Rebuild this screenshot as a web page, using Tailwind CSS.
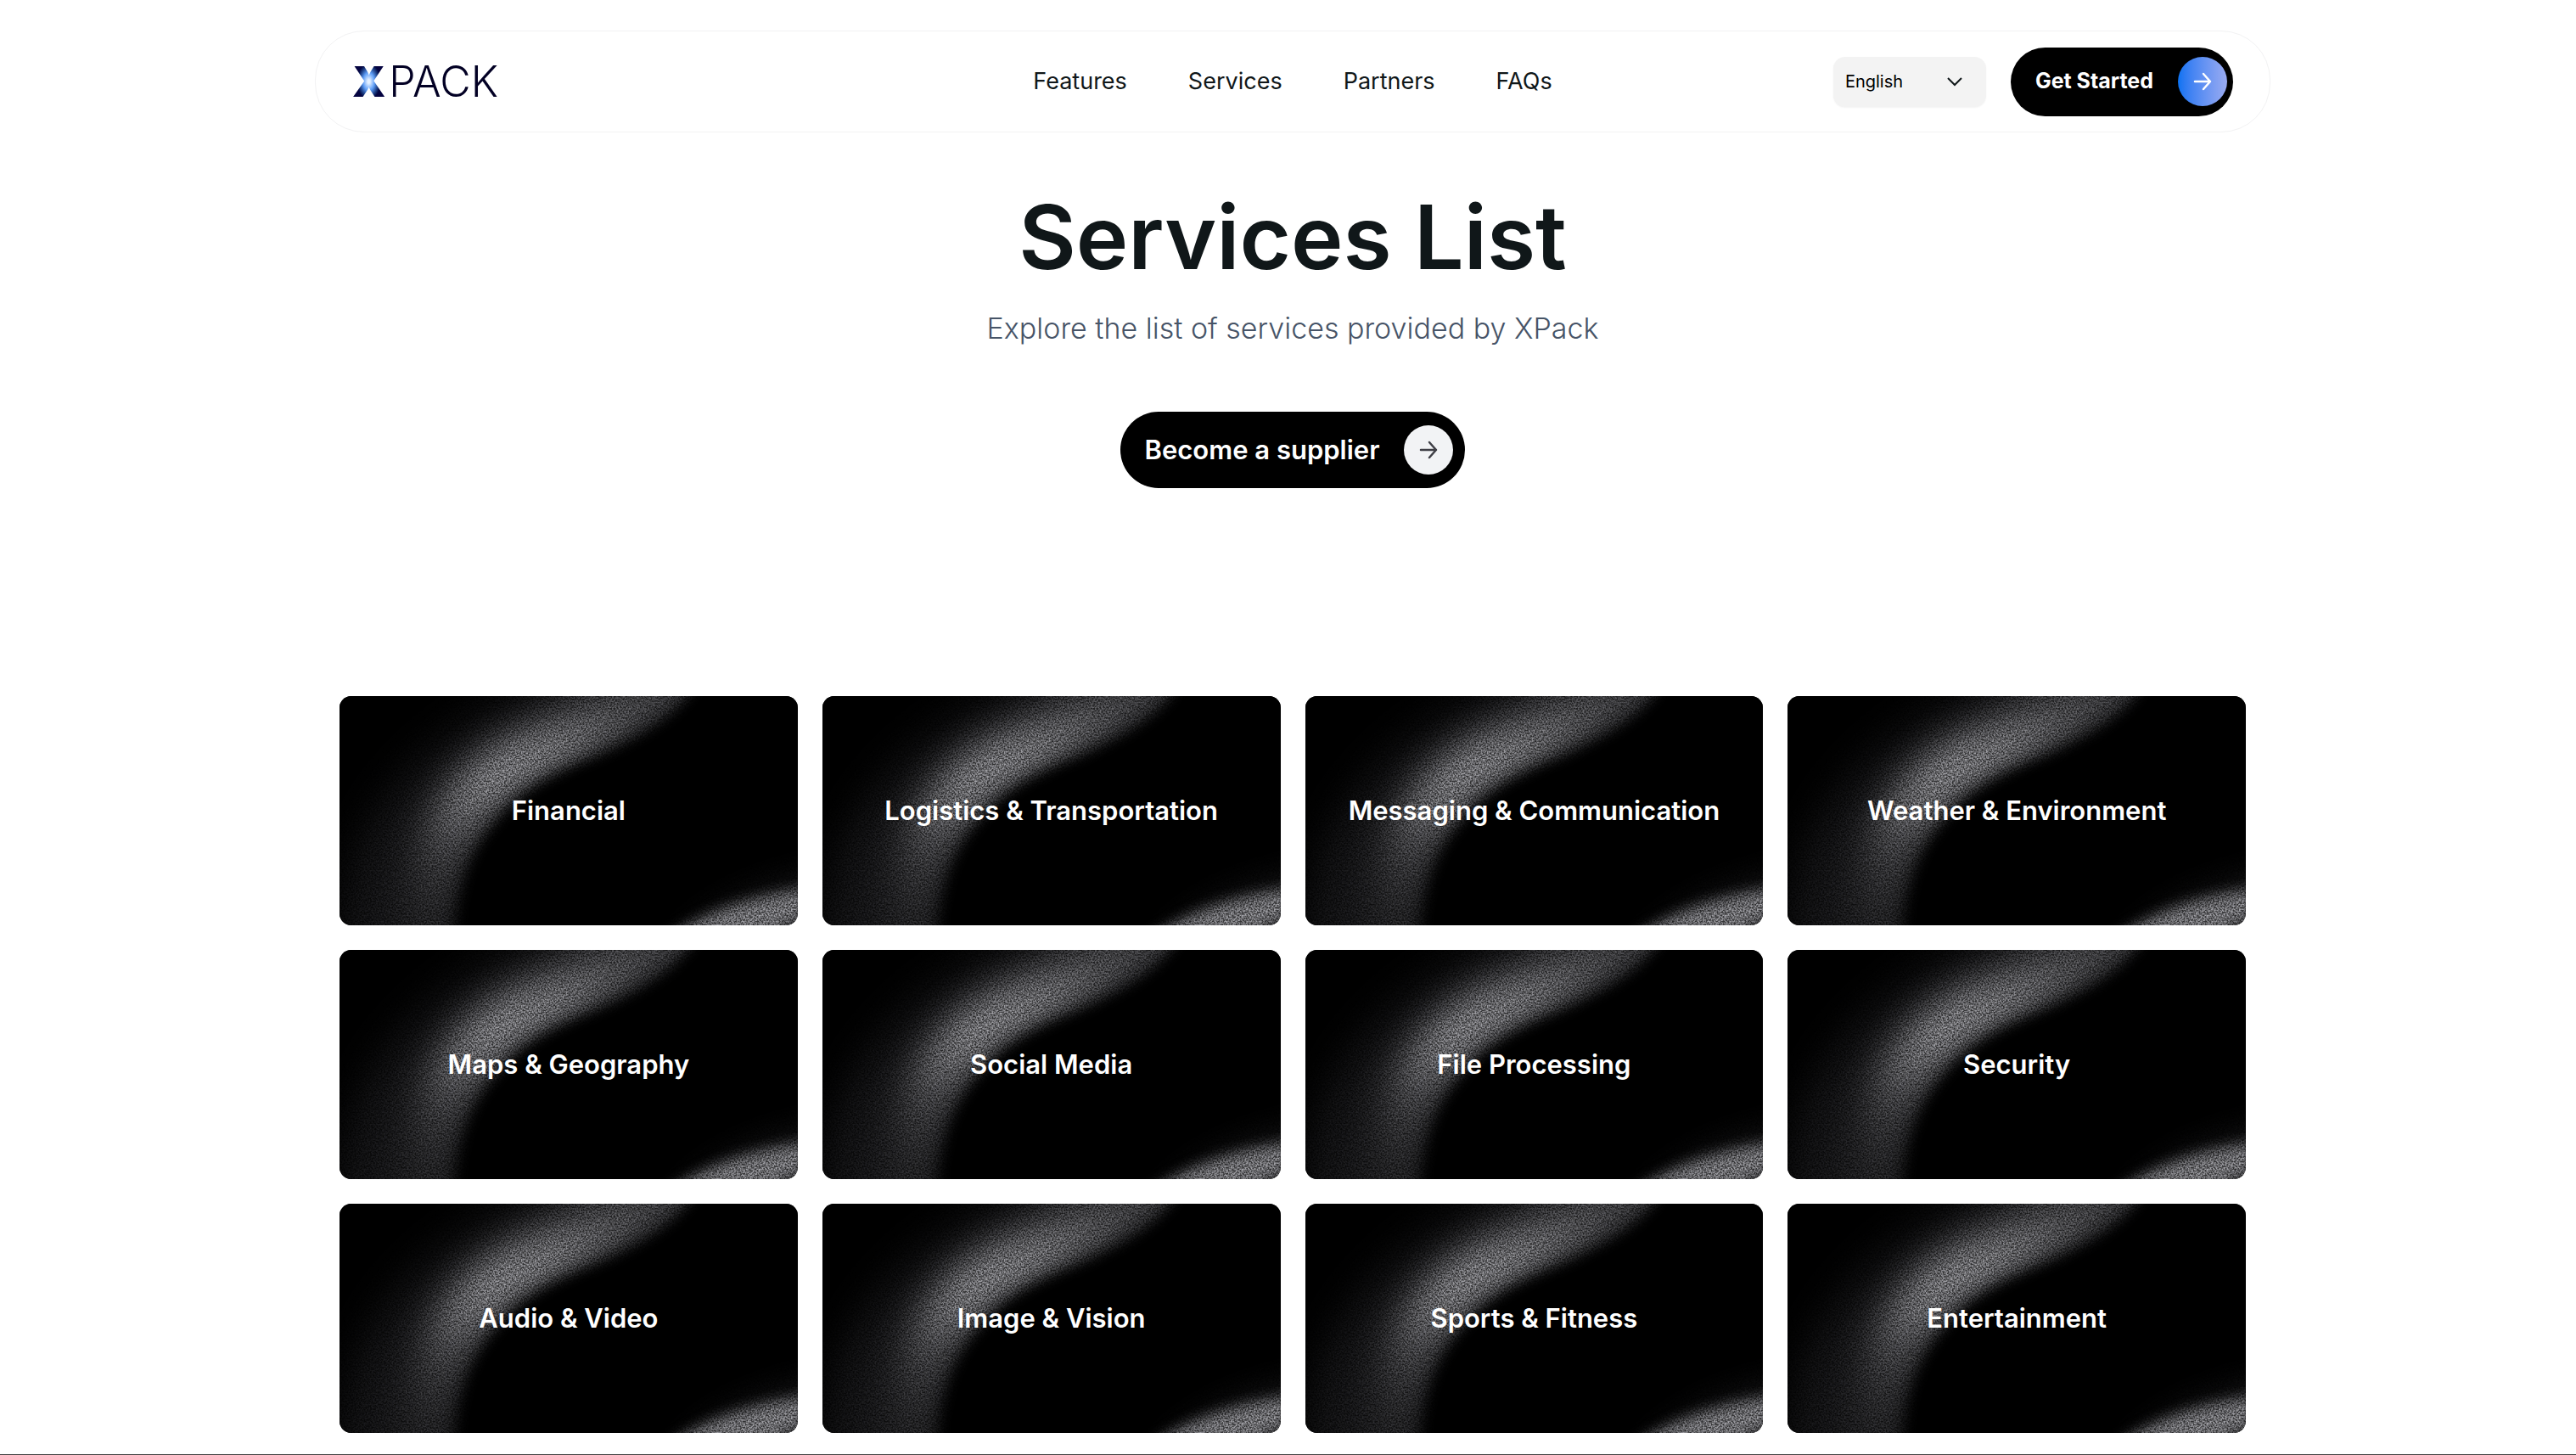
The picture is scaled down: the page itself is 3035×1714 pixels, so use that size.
<!DOCTYPE html>
<html lang="en">
  <head>
    <meta charset="UTF-8" />
    <meta name="viewport" content="width=device-width, initial-scale=1.0" />
    <title>XPack - Services List</title>
    <script src="https://cdn.jsdelivr.net/npm/@tailwindcss/browser@4"></script>
  </head>
  <body class="bg-white font-['Inter',sans-serif] text-[#101719] pl-[11px]">
    <!-- shared card artwork and arrow icon -->
    <svg class="absolute w-0 h-0" aria-hidden="true">
      <defs>
        <filter id="blurWide" x="-50%" y="-50%" width="200%" height="200%" color-interpolation-filters="sRGB">
          <feGaussianBlur stdDeviation="24" />
        </filter>
        <filter id="blurMid" x="-50%" y="-50%" width="200%" height="200%" color-interpolation-filters="sRGB">
          <feGaussianBlur stdDeviation="19" />
        </filter>
        <filter id="blurEdge" x="-20%" y="-20%" width="140%" height="140%" color-interpolation-filters="sRGB">
          <feGaussianBlur stdDeviation="8" />
        </filter>
        <filter id="grain" filterUnits="userSpaceOnUse" x="0" y="0" width="540" height="270" color-interpolation-filters="sRGB">
          <feTurbulence type="fractalNoise" baseFrequency="0.55" numOctaves="2" seed="7" />
          <feColorMatrix values="2.4 0 0 0 -0.7  2.4 0 0 0 -0.7  2.4 0 0 0 -0.7  0 0 0 0 1" result="noise" />
          <feComposite in="SourceGraphic" in2="noise" operator="arithmetic" k1="0.9" k2="0.4" k3="0" k4="0" />
        </filter>
        <linearGradient id="ridge" x1="0" y1="270" x2="0" y2="0" gradientUnits="userSpaceOnUse">
          <stop offset="0" stop-color="#252527" />
          <stop offset="0.3" stop-color="#414144" />
          <stop offset="0.6" stop-color="#88888c" />
          <stop offset="0.75" stop-color="#88888c" />
          <stop offset="1" stop-color="#434346" />
        </linearGradient>
        <symbol id="cardArt" viewBox="0 0 540 270" preserveAspectRatio="xMidYMid slice">
          <g filter="url(#grain)">
            <rect width="540" height="270" fill="#000" />
            <path d="M420 -40C300 10 190 60 130 120C80 170 60 220 60 310" fill="none" stroke="#18181a" stroke-width="110" filter="url(#blurWide)" />
            <path d="M420 -40C360 5 265 45 212 76C140 120 108 180 105 310" fill="none" stroke="url(#ridge)" stroke-width="62" filter="url(#blurMid)" />
            <path d="M425 -20C400 25 362 46 310 70C257 90 218 110 193 140C158 182 140 212 138 310L600 310L600 -20Z" fill="#000" filter="url(#blurEdge)" />
            <path d="M380 320C420 255 480 225 580 205L580 320Z" fill="#3a3a3e" opacity="0.4" filter="url(#blurMid)" />
            <path d="M378 292C428 256 480 236 570 225L570 254C540 262 525 270 495 292Z" fill="#7c7c80" filter="url(#blurEdge)" />
          </g>
        </symbol>
        <symbol id="arrow" viewBox="0 0 24 24">
          <path d="M3 12H21M13 3L21 12L13 21" fill="none" stroke="currentColor" stroke-width="2.5" stroke-linecap="round" stroke-linejoin="round" />
        </symbol>
      </defs>
    </svg>

    <header class="mx-auto mt-9 max-w-[2304px] h-[120px] px-[43px] rounded-[58px] border border-[#f2f2f3] grid grid-cols-[1fr_auto_1fr] items-center">
      <a href="#" aria-label="XPACK" class="flex items-center gap-1 text-[50px] leading-[60px] text-[#020024]">
        <span class="font-black text-transparent bg-clip-text bg-radial from-[#e4f0ff] from-5% via-[#5c9cf5] via-25% to-[#040340] to-50%">X</span>
        <span class="font-light">PACK</span>
      </a>
      <nav class="flex gap-[72px] text-[27px] leading-10">
        <a href="#features">Features</a>
        <a href="#services">Services</a>
        <a href="#partners">Partners</a>
        <a href="#faqs">FAQs</a>
      </nav>
      <div class="flex items-center justify-end gap-[29px]">
        <div class="relative">
          <select id="language" aria-label="Language" class="appearance-none w-[180px] h-[59px] pl-[14px] rounded-[14px] bg-[#f3f3f3] shadow-xs text-[20px] leading-7 text-black">
            <option>English</option>
          </select>
          <svg class="absolute right-7 top-5 size-[18px] pointer-events-none" viewBox="0 0 18 18" fill="none" stroke="#101719" stroke-width="2">
            <path d="M1 5L9 13L17 5" />
          </svg>
        </div>
        <button type="button" class="flex items-center gap-[29px] h-[81px] pl-[29px] pr-[7px] rounded-full bg-black text-white text-[25px] font-bold">
          Get Started
          <span class="flex items-center justify-center size-[58px] rounded-full bg-linear-to-r from-[#0572f2] to-[#9aabf1]">
            <svg class="size-6"><use href="#arrow" /></svg>
          </span>
        </button>
      </div>
    </header>

    <main>
      <section class="flex flex-col items-center pt-[58px] text-center">
        <h1 class="text-[104px] leading-[130px] font-semibold">Services List</h1>
        <p class="mt-[18px] text-[34px] leading-[50px] font-light text-[#475467]">Explore the list of services provided by XPack</p>
        <button type="button" class="mt-[73px] flex items-center gap-[29px] h-[90px] pl-[29px] pr-[14px] rounded-full bg-black text-white text-[31px] font-semibold">
          Become a supplier
          <span class="flex items-center justify-center size-[58px] rounded-full bg-[#f2f3f5] text-[#3f3f46]">
            <svg class="size-6"><use href="#arrow" /></svg>
          </span>
        </button>
      </section>

      <section id="services" class="mx-auto mt-[245px] max-w-[2246px] grid grid-cols-4 gap-[29px] text-[31px] leading-[44px] font-semibold text-white *:relative *:flex *:items-center *:justify-center *:aspect-2/1 *:rounded-[14px] *:overflow-hidden *:bg-black">
        <a href="#"><svg class="absolute inset-0 size-full"><use href="#cardArt" /></svg><span class="relative">Financial</span></a>
        <a href="#"><svg class="absolute inset-0 size-full"><use href="#cardArt" /></svg><span class="relative">Logistics &amp; Transportation</span></a>
        <a href="#"><svg class="absolute inset-0 size-full"><use href="#cardArt" /></svg><span class="relative">Messaging &amp; Communication</span></a>
        <a href="#"><svg class="absolute inset-0 size-full"><use href="#cardArt" /></svg><span class="relative">Weather &amp; Environment</span></a>
        <a href="#"><svg class="absolute inset-0 size-full"><use href="#cardArt" /></svg><span class="relative">Maps &amp; Geography</span></a>
        <a href="#"><svg class="absolute inset-0 size-full"><use href="#cardArt" /></svg><span class="relative">Social Media</span></a>
        <a href="#"><svg class="absolute inset-0 size-full"><use href="#cardArt" /></svg><span class="relative">File Processing</span></a>
        <a href="#"><svg class="absolute inset-0 size-full"><use href="#cardArt" /></svg><span class="relative">Security</span></a>
        <a href="#"><svg class="absolute inset-0 size-full"><use href="#cardArt" /></svg><span class="relative">Audio &amp; Video</span></a>
        <a href="#"><svg class="absolute inset-0 size-full"><use href="#cardArt" /></svg><span class="relative">Image &amp; Vision</span></a>
        <a href="#"><svg class="absolute inset-0 size-full"><use href="#cardArt" /></svg><span class="relative">Sports &amp; Fitness</span></a>
        <a href="#"><svg class="absolute inset-0 size-full"><use href="#cardArt" /></svg><span class="relative">Entertainment</span></a>
      </section>
    </main>
    <footer class="mt-[25px] -ml-[11px] border-t border-[#444444]"></footer>
  </body>
</html>
